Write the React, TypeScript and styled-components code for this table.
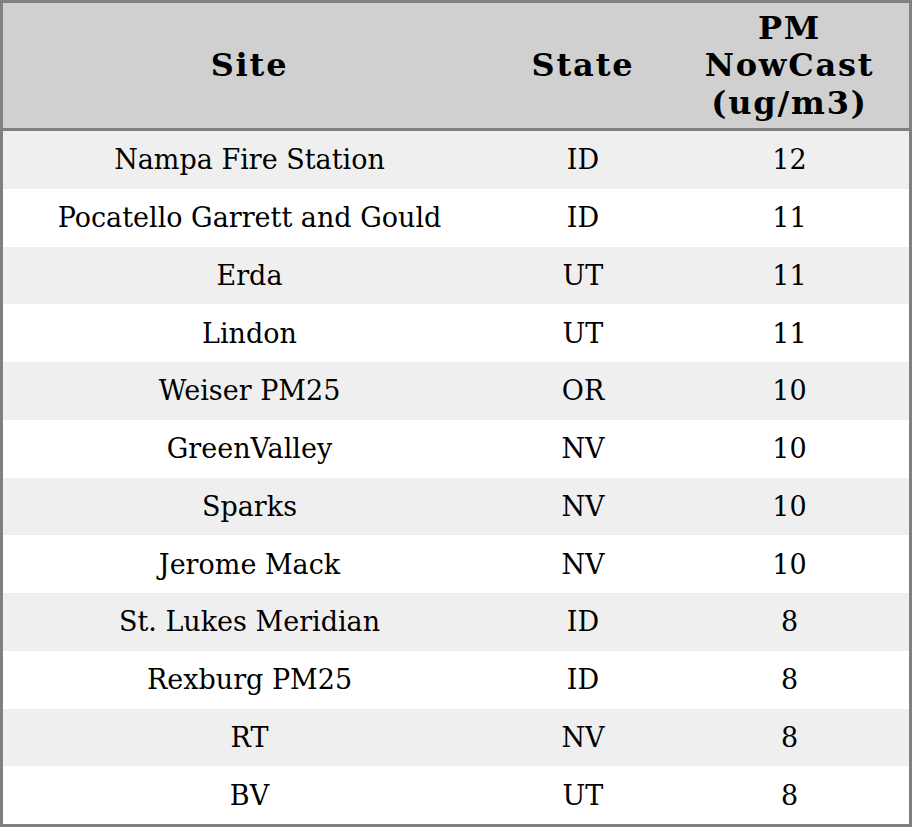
import styled, { createGlobalStyle } from 'styled-components';

const Global = createGlobalStyle`
    html, body {
        margin: 0;
        padding: 0;
        background: #ffffff;
    }
`;

const Table = styled.div`
    box-sizing: border-box;
    width: 912px;
    height: 827px;
    border: 3px solid #808080;
    display: grid;
    grid-template-columns: 493px 174px 1fr;
    grid-template-rows: 128px repeat(12, 1fr);
    font-family: "DejaVu Serif", serif;
    color: #000;
`;

const Head = styled.div`
    box-sizing: border-box;
    background: #d0d0d0;
    border-bottom: 3px solid #808080;
    display: flex;
    align-items: center;
    justify-content: center;
    text-align: center;
    font-weight: bold;
    font-size: 32px;
    letter-spacing: 1.8px;
    line-height: 37.5px;
    padding-top: 1px;
`;

const Cell = styled.div<{ $odd: boolean }>`
    background: ${p => (p.$odd ? '#efefef' : '#ffffff')};
    display: flex;
    align-items: center;
    justify-content: center;
    font-size: 27px;
    white-space: nowrap;
`;

type Row = { site: string; state: string; pm: number };

const rows: Row[] = [
    { site: 'Nampa Fire Station', state: 'ID', pm: 12 },
    { site: 'Pocatello Garrett and Gould', state: 'ID', pm: 11 },
    { site: 'Erda', state: 'UT', pm: 11 },
    { site: 'Lindon', state: 'UT', pm: 11 },
    { site: 'Weiser PM25', state: 'OR', pm: 10 },
    { site: 'GreenValley', state: 'NV', pm: 10 },
    { site: 'Sparks', state: 'NV', pm: 10 },
    { site: 'Jerome Mack', state: 'NV', pm: 10 },
    { site: 'St. Lukes Meridian', state: 'ID', pm: 8 },
    { site: 'Rexburg PM25', state: 'ID', pm: 8 },
    { site: 'RT', state: 'NV', pm: 8 },
    { site: 'BV', state: 'UT', pm: 8 },
];

const App = () => {
    return (
        <>
            <Global />
            <Table>
                <Head>Site</Head>
                <Head>State</Head>
                <Head>PM<br />NowCast<br />(ug/m3)</Head>
                {rows.map((r, i) => (
                    <>
                        <Cell key={`s${i}`} $odd={i % 2 === 0}>{r.site}</Cell>
                        <Cell key={`t${i}`} $odd={i % 2 === 0}>{r.state}</Cell>
                        <Cell key={`p${i}`} $odd={i % 2 === 0}>{r.pm}</Cell>
                    </>
                ))}
            </Table>
        </>
    );
};

export default App;
